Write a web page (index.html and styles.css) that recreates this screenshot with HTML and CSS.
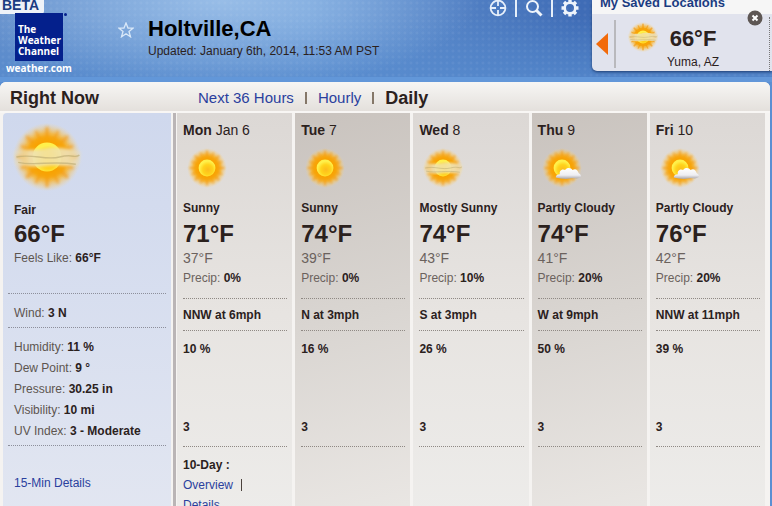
FILE: index.html
```html
<!DOCTYPE html>
<html lang="en">
<head>
	<meta charset="UTF-8">
	<title>Holtville,CA Weather</title>
	<link rel="stylesheet" href="styles.css">
</head>
<body>
	<svg class="defs" aria-hidden="true">
		<defs>
			<radialGradient id="glow">
				<stop offset="0.45" stop-color="#f9a90a"/>
				<stop offset="0.7" stop-color="#f9b42c" stop-opacity="0.8"/>
				<stop offset="1" stop-color="#f8d488" stop-opacity="0"/>
			</radialGradient>
			<radialGradient id="disc" cx="0.55" cy="0.6">
				<stop offset="0" stop-color="#fdbb1c"/>
				<stop offset="0.6" stop-color="#ffd31c"/>
				<stop offset="1" stop-color="#fff04a"/>
			</radialGradient>
			<linearGradient id="cloudFill" x1="0" y1="0" x2="0" y2="1">
				<stop offset="0" stop-color="#ffffff"/>
				<stop offset="0.65" stop-color="#eeeef2"/>
				<stop offset="1" stop-color="#a9a5a8"/>
			</linearGradient>
			<linearGradient id="hazeFill">
				<stop offset="0" stop-color="#e9dfbe" stop-opacity="0.2"/>
				<stop offset="0.25" stop-color="#eee2ba" stop-opacity="0.9"/>
				<stop offset="0.5" stop-color="#f3e29a" stop-opacity="0.95"/>
				<stop offset="0.8" stop-color="#eee2ba" stop-opacity="0.9"/>
				<stop offset="1" stop-color="#e9dfbe" stop-opacity="0.4"/>
			</linearGradient>
			<filter id="soft"><feGaussianBlur stdDeviation="0.8"/></filter>
		</defs>
		<symbol id="sun" viewBox="0 0 40 40">
			<circle cx="20" cy="20" r="19" fill="url(#glow)"/>
			<g filter="url(#soft)" stroke="#f39a14" stroke-width="2" stroke-linecap="round" opacity="0.65">
				<path d="M20 4V9M20 31V36M4 20H9M31 20H36M9 9L12 12M28 28L31 31M9 31L12 28M28 12L31 9"/>
				<path d="M14 6L16 10M26 6L24 10M14 34L16 30M26 34L24 30M6 14L10 16M6 26L10 24M34 14L30 16M34 26L30 24" stroke-width="1.500"/>
			</g>
			<circle cx="20" cy="20" r="12" fill="#f8a004" opacity="0.7" filter="url(#soft)"/>
			<circle cx="20" cy="20" r="8" fill="url(#disc)"/>
		</symbol>
		<symbol id="hazy" viewBox="0 0 40 40">
			<use href="#sun" width="40" height="40"/>
			<path filter="url(#soft)" fill="url(#hazeFill)" d="M1 17C8 15 14 17 20 15C27 14 33 16 39 17L38 24C32 26 27 24 20 25C14 26 7 25 2 24Z"/>
			<path d="M3 20C12 18 19 22 27 20S35 21 38 19M4 23C13 25 23 22 36 24" fill="none" stroke="#b9a970" stroke-width="0.8" opacity="0.6"/>
		</symbol>
		<symbol id="cloudy" viewBox="0 0 40 40">
			<use href="#sun" width="40" height="40"/>
			<path fill="url(#cloudFill)" d="M14 29C14 27 16 26 18 26C17 23 20 20 23 22C25 19 29 20 30 22C33 20 35 22 36 25C38 26 39 29 37 29C34 31 31 29 28 30C23 31 18 30 14 29Z"/>
		</symbol>
	</svg>

	<header class="header">
		<div class="brand">
			<span class="beta">BETA</span>
			<a class="logo" href="#">The<br>Weather<br>Channel</a>
			<a class="site" href="#">weather.com</a>
		</div>
		<button class="star" type="button" aria-label="Save location">
			<svg width="16" height="16" viewBox="0 0 16 16"><path d="M8 1L10 6L15 6.200L11 9.500L12.500 14.800L8 11.700L3.500 14.800L5 9.500L1 6.200L6 6Z" fill="none" stroke="#d9e8f8" stroke-width="1.300"/></svg>
		</button>
		<div class="place">
			<h1>Holtville,CA</h1>
			<p>Updated: January 6th, 2014, 11:53 AM PST</p>
		</div>
		<div class="actions">
			<button type="button" aria-label="Locate">
				<svg width="18" height="18" viewBox="0 0 18 18" fill="none" stroke="#e6effa" stroke-width="1.800"><circle cx="9" cy="9" r="7.400"/><path d="M9 2V7M9 11V16M2 9H7M11 9H16"/></svg>
			</button>
			<button type="button" aria-label="Search">
				<svg width="18" height="18" viewBox="0 0 18 18" fill="none" stroke="#eef4fb"><circle cx="7.500" cy="7.500" r="5.500" stroke-width="2"/><path d="M11.500 11.500L16.500 16.500" stroke-width="3"/></svg>
			</button>
			<button type="button" aria-label="Settings">
				<svg width="18" height="18" viewBox="0 0 18 18" fill="none" stroke="#eef4fb"><circle cx="9" cy="9" r="5.300" stroke-width="2.600"/><path d="M9 .5V3.500M9 14.500V17.500M.5 9H3.500M14.500 9H17.500M3 3L5 5M13 13L15 15M3 15L5 13M13 5L15 3" stroke-width="3.400"/></svg>
			</button>
		</div>
		<aside class="saved">
			<h2>My Saved Locations</h2>
			<div class="saved_item">
				<button class="prev" type="button" aria-label="Previous"></button>
				<svg class="saved_icon"><use href="#hazy"/></svg>
				<div class="saved_text">
					<b>66°F</b>
					<span>Yuma, AZ</span>
				</div>
			</div>
			<button class="close" type="button" aria-label="Remove">
				<svg width="16" height="16" viewBox="0 0 16 16"><circle cx="8" cy="8" r="7.500" fill="#5e5754"/><path d="M5.500 5.500L10.500 10.500M10.500 5.500L5.500 10.500" stroke="#fff" stroke-width="2"/></svg>
			</button>
		</aside>
	</header>

	<main class="panel">
		<div class="bar">
			<h2>Right Now</h2>
			<nav class="tabs">
				<a href="#">Next 36 Hours</a>
				<i></i>
				<a href="#">Hourly</a>
				<i></i>
				<b>Daily</b>
			</nav>
		</div>
		<div class="forecast">
			<section class="now">
				<div class="now_top">
					<svg class="now_icon"><use href="#hazy"/></svg>
					<p><b>Fair</b></p>
					<p class="temp">66°F</p>
					<p>Feels Like: <b>66°F</b></p>
				</div>
				<div class="now_wind">
					<p>Wind: <b>3 N</b></p>
				</div>
				<div class="now_list">
					<p>Humidity: <b>11 %</b></p>
					<p>Dew Point: <b>9 °</b></p>
					<p>Pressure: <b>30.25 in</b></p>
					<p>Visibility: <b>10 mi</b></p>
					<p>UV Index: <b>3 - Moderate</b></p>
				</div>
				<div class="now_more"><a href="#">15-Min Details</a></div>
			</section>
			<div class="days">
				<section class="day">
					<div class="day_top">
						<h3>Mon <span>Jan 6</span></h3>
						<svg class="day_icon"><use href="#sun"/></svg>
						<p><b>Sunny</b></p>
						<p class="temp">71°F</p>
						<p class="low">37°F</p>
						<p>Precip: <b>0%</b></p>
					</div>
					<p class="wind"><b>NNW at 6mph</b></p>
					<div class="air">
						<p><b>10 %</b></p>
						<p class="uv"><b>3</b></p>
					</div>
					<div class="more">
						<p><b>10-Day :</b></p>
						<p class="more_links"><a href="#">Overview</a><i></i></p>
						<p><a href="#">Details</a></p>
					</div>
				</section>
				<section class="day dark">
					<div class="day_top">
						<h3>Tue <span>7</span></h3>
						<svg class="day_icon"><use href="#sun"/></svg>
						<p><b>Sunny</b></p>
						<p class="temp">74°F</p>
						<p class="low">39°F</p>
						<p>Precip: <b>0%</b></p>
					</div>
					<p class="wind"><b>N at 3mph</b></p>
					<div class="air">
						<p><b>16 %</b></p>
						<p class="uv"><b>3</b></p>
					</div>
				</section>
				<section class="day">
					<div class="day_top">
						<h3>Wed <span>8</span></h3>
						<svg class="day_icon"><use href="#hazy"/></svg>
						<p><b>Mostly Sunny</b></p>
						<p class="temp">74°F</p>
						<p class="low">43°F</p>
						<p>Precip: <b>10%</b></p>
					</div>
					<p class="wind"><b>S at 3mph</b></p>
					<div class="air">
						<p><b>26 %</b></p>
						<p class="uv"><b>3</b></p>
					</div>
				</section>
				<section class="day dark">
					<div class="day_top">
						<h3>Thu <span>9</span></h3>
						<svg class="day_icon"><use href="#cloudy"/></svg>
						<p><b>Partly Cloudy</b></p>
						<p class="temp">74°F</p>
						<p class="low">41°F</p>
						<p>Precip: <b>20%</b></p>
					</div>
					<p class="wind"><b>W at 9mph</b></p>
					<div class="air">
						<p><b>50 %</b></p>
						<p class="uv"><b>3</b></p>
					</div>
				</section>
				<section class="day">
					<div class="day_top">
						<h3>Fri <span>10</span></h3>
						<svg class="day_icon"><use href="#cloudy"/></svg>
						<p><b>Partly Cloudy</b></p>
						<p class="temp">76°F</p>
						<p class="low">42°F</p>
						<p>Precip: <b>20%</b></p>
					</div>
					<p class="wind"><b>NNW at 11mph</b></p>
					<div class="air">
						<p><b>39 %</b></p>
						<p class="uv"><b>3</b></p>
					</div>
				</section>
			</div>
		</div>
	</main>
</body>
</html>
```

FILE: styles.css
```css
*{
	margin: 0;
	padding: 0;
	box-sizing: border-box;
}
body{
	height: 100vh;
	overflow: hidden;
	background: #5b8fd2;
	font: 12px/20px "Liberation Sans", Arial, sans-serif;
	color: #2b211d;
}
a{
	color: #2a3f9e;
	text-decoration: none;
}
button{
	border: 0;
	background: none;
	cursor: pointer;
}
svg{
	display: block;
}
.defs{
	position: absolute;
	width: 0;
	height: 0;
}

/* header */
.header{
	display: flex;
	align-items: flex-start;
	height: 82px;
	border-bottom: 5px solid #6297d9;
	background: radial-gradient(circle, rgba(255,255,255,0.05) 1px, transparent 2px) 0 0/6px 6px,
		radial-gradient(ellipse 260px 90px at 220px 0, rgba(168,202,238,0.75), transparent),
		linear-gradient(rgba(86,138,205,0) 20%, rgba(86,138,205,0.8)),
		linear-gradient(90deg, #648fcb, #6a9ad6 40%, #3f6cb6 75%, #3c69b4);
}
.brand{
	display: flex;
	flex-direction: column;
	width: 78px;
	align-items: center;
}
.beta{
	align-self: flex-start;
	padding: 0 5px 0 2px;
	margin-top: -3px;
	border-radius: 0 0 3px 0;
	background: #eef2f8;
	color: #1b3c82;
	font-size: 14px;
	font-weight: bold;
	line-height: 17px;
}
.logo{
	position: relative;
	width: 48px;
	height: 48px;
	padding: 11px 3px 0;
	margin-top: -1px;
	background: #04208c;
	color: #fff;
	font: bold 10px/11px "Open Sans", sans-serif;
}
.logo::after{
	content: "";
	position: absolute;
	top: 0;
	right: -4px;
	width: 3px;
	height: 3px;
	border-radius: 50%;
	background: #04208c;
}
.site{
	color: #fff;
	font: bold 10px/15px "Open Sans", sans-serif;
}
.star{
	margin: 22px 14px 0 40px;
}
.place{
	flex: 1;
	padding-top: 16px;
}
.place h1{
	color: #000;
	font-size: 22px;
	line-height: 26px;
}
.place p{
	line-height: 18px;
	white-space: nowrap;
}
.actions{
	display: flex;
	padding-right: 13px;
}
.actions button{
	height: 17px;
	padding: 0 8px;
	border-left: 2px solid #e6effa;
}
.actions button svg{
	margin-top: -2px;
}
.actions button:first-child{
	border-left: 0;
}
.actions button:last-child{
	padding-right: 0;
}
.saved{
	position: relative;
	width: 180px;
	height: 71px;
	overflow: hidden;
	border-radius: 0 0 0 5px;
	background: #e1e3ed;
	box-shadow: 0 1px 3px #1d3c70;
}
.saved h2{
	height: 14px;
	padding-left: 8px;
	background: #f6f6f6;
	color: #1b3c82;
	font-size: 13px;
	line-height: 6px;
}
.saved_item{
	display: flex;
	align-items: center;
	height: 54px;
	border-right: 1px dotted #777;
	margin: 3px 2px 0 4px;
}
.prev{
	width: 20px;
	height: 48px;
	border-right: 2px solid #b9b9bd;
}
.prev::before{
	content: "";
	display: block;
	width: 12px;
	height: 22px;
	background: #f26a0a;
	clip-path: polygon(0 50%, 100% 0, 100% 100%);
}
.saved_icon{
	width: 32px;
	height: 32px;
	margin: 0 6px 14px 11px;
}
.saved_text{
	align-self: flex-end;
	width: 56px;
	margin-bottom: -1px;
	text-align: center;
	white-space: nowrap;
}
.saved_text b{
	display: block;
	font-size: 22px;
	line-height: 26px;
}
.saved_text span{
	display: block;
}
.close{
	position: absolute;
	top: 10px;
	right: 9px;
}

/* panel */
.panel{
	margin-right: 2px;
	padding: 0 3px;
	border-radius: 6px 6px 0 0;
	background: #f5f3f1;
}
.bar{
	display: flex;
	align-items: center;
	height: 31px;
	margin: 0 -3px;
	padding: 2px 10px 0;
	border-bottom: 2px solid #f8f6f4;
	border-radius: 6px 6px 0 0;
	background: linear-gradient(#f7f6f4, #e4e0dc);
	font-size: 15px;
}
.bar h2{
	width: 188px;
	font-size: 18px;
}
.tabs{
	display: flex;
	align-items: center;
	gap: 11px;
}
.tabs i{
	width: 2px;
	height: 12px;
	background: #857768;
}
.tabs b{
	font-size: 18px;
}
.forecast{
	display: flex;
	min-height: calc(100vh - 113px);
}
.now{
	flex: 0 0 168px;
	padding: 0 5px;
	border-radius: 4px 0 0 0;
	background: linear-gradient(#cfd8ed, #d7deef 45%, #e2e6f1);
	color: #5d554f;
}
.now b, .now .temp, .day b{
	color: #2b211d;
}
.now > div{
	padding-left: 6px;
	border-bottom: 1px dotted #8d8f9b;
}
.now .now_top{
	padding-top: 8px;
	padding-bottom: 25px;
}
.now_icon{
	width: 72px;
	height: 72px;
	margin: 0 0 7px -3px;
}
.temp{
	font-size: 24px;
	font-weight: bold;
	line-height: 28px;
}
.now .now_wind{
	padding-top: 9px;
	padding-bottom: 4px;
}
.now .now_list{
	padding-top: 9px;
	padding-bottom: 3px;
	line-height: 21px;
}
.now .now_more{
	padding-top: 27px;
	border-bottom: 0;
}
.days{
	flex: 1;
	display: grid;
	grid-template-columns: repeat(5, 1fr);
	gap: 3px;
	margin-left: 2px;
	border-left: 3px solid #bab5b6;
	padding: 0 2px 0 1px;
}
.day{
	padding: 0 5px 0 6px;
	background: linear-gradient(#dcd8d5, #e7e4e1 50%, #edecea);
	color: #6b625d;
}
.dark{
	background: linear-gradient(165deg, #c9c3be, #d9d5d1 50%, #eae7e4);
}
.day_top{
	padding: 7px 0 10px;
	border-bottom: 1px dotted #8f8984;
}
.day h3{
	color: #2b211d;
	font-size: 14px;
}
.day h3 span{
	font-weight: normal;
}
.day_icon{
	width: 42px;
	height: 42px;
	margin: 7px 0 9px 3px;
}
.day .temp{
	margin-top: 2px;
	color: #2b211d;
}
.low{
	font-size: 14px;
}
.wind{
	padding: 6px 0 5px;
	border-bottom: 1px dotted #8f8984;
	white-space: nowrap;
}
.air{
	padding: 8px 0 9px;
	border-bottom: 1px dotted #8f8984;
}
.uv{
	margin-top: 58px;
}
.more{
	padding-top: 8px;
}
.more_links{
	display: flex;
	align-items: center;
	gap: 8px;
}
.more_links i{
	width: 1px;
	height: 12px;
	background: #4b423d;
}
```
